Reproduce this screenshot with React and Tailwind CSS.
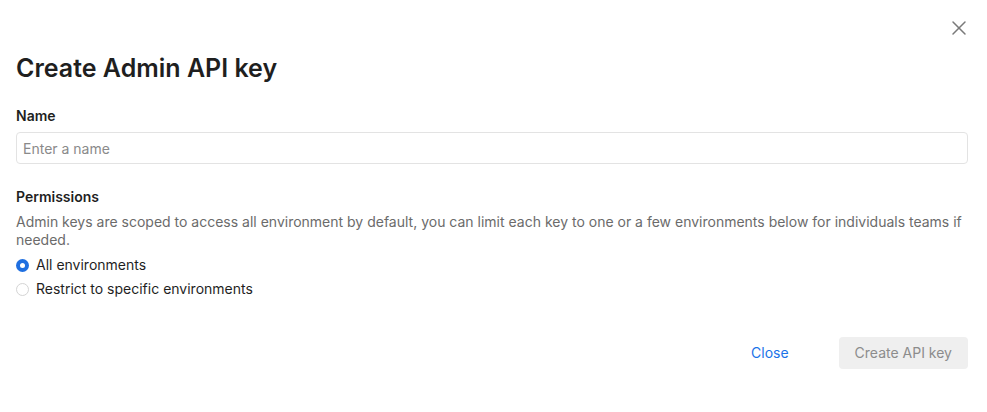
import {useState} from 'react';
import {X} from 'lucide-react';

const font = {fontFamily: 'Inter, "Noto Sans", sans-serif'};

function Radio({checked, label, onChange}) {
  return (
    <label className="flex items-center gap-[7px] h-6 cursor-pointer" onClick={onChange}>
      {checked ? (
        <span className="w-[13px] h-[13px] rounded-full bg-[#1f6fe0] flex items-center justify-center">
          <span className="w-[5px] h-[5px] rounded-full bg-white" />
        </span>
      ) : (
        <span className="w-[13px] h-[13px] rounded-full border border-[#d4d4d4] bg-white" />
      )}
      <span className="text-sm text-[#1f1f1f]">{label}</span>
    </label>
  );
}

export default function App() {
  const [scope, setScope] = useState('all');

  return (
    <div className="w-[987px] h-[412px] bg-white relative pl-4 pr-[19px] pt-[52px]" style={font}>
      <button className="absolute top-4 right-4 w-6 h-6 flex items-center justify-center text-[#7a7a7a]">
        <X className="w-6 h-6" strokeWidth={1.5} />
      </button>

      <h1 className="text-[25px] leading-8 font-semibold text-[#1f1f1f]">
        Create Admin API key
      </h1>

      <div className="mt-[22px]">
        <div className="text-sm leading-5 font-semibold text-[#1f1f1f]">Name</div>
        <input
          placeholder="Enter a name"
          className="mt-[6px] w-full h-8 px-[6px] text-sm border border-[#e3e3e3] rounded-[4px] placeholder:text-[#8a8a8a] outline-none"
        />
      </div>

      <div className="mt-[23px]">
        <div className="text-sm leading-5 font-semibold text-[#1f1f1f]">Permissions</div>
        <p className="mt-[6px] text-sm leading-[18px] text-[#6b6b6b]">
          Admin keys are scoped to access all environment by default, you can limit each key to one or a few environments below for individuals teams if needed.
        </p>
        <div className="mt-1 flex flex-col">
          <Radio checked={scope === 'all'} label="All environments" onChange={() => setScope('all')} />
          <Radio checked={scope === 'some'} label="Restrict to specific environments" onChange={() => setScope('some')} />
        </div>
      </div>

      <div className="mt-9 flex justify-end items-center gap-[50px]">
        <button className="text-sm text-[#1a73e8]">Close</button>
        <button className="h-8 px-4 rounded-[4px] bg-[#efefef] text-sm text-[#8c8c8c]">
          Create API key
        </button>
      </div>
    </div>
  );
}
